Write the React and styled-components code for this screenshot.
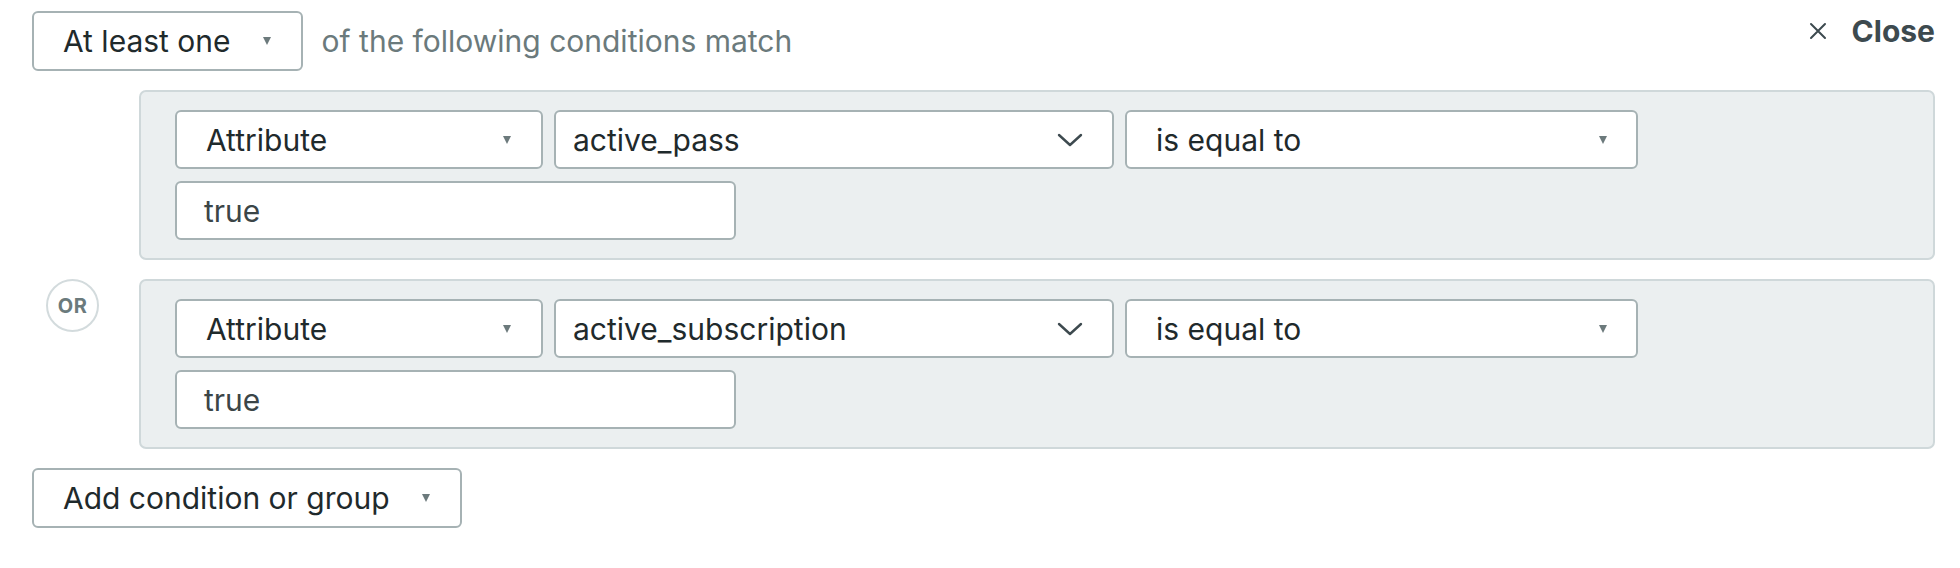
import React from "react";
import styled, { createGlobalStyle } from "styled-components";

const GlobalStyle = createGlobalStyle`
  body {
    margin: 0;
    background: #ffffff;
    font-family: Inter, "Liberation Sans", sans-serif;
    color: #232d2f;
  }
`;

const Page = styled.div`
  padding: 11px 25px 0 32px;
  display: flex;
  flex-direction: column;
  gap: 19px;
`;

const Header = styled.div`
  display: flex;
  align-items: center;
  gap: 19px;
  height: 60px;
`;

const HeaderText = styled.span`
  font-size: 30px;
  color: #6b7a7c;
  flex: 1;
`;

const CloseButton = styled.button`
  align-self: flex-start;
  margin-top: 2px;
  display: flex;
  align-items: center;
  gap: 25px;
  border: none;
  background: none;
  padding: 0;
  font-family: inherit;
  font-size: 30px;
  line-height: 36px;
  font-weight: 700;
  color: #3d4a4f;
  cursor: pointer;
`;

const Select = styled.div`
  box-sizing: border-box;
  display: flex;
  align-items: center;
  justify-content: space-between;
  gap: 32px;
  height: ${(p) => p.$height || 59}px;
  width: ${(p) => (p.$width ? `${p.$width}px` : "auto")};
  padding: 0 ${(p) => p.$padRight || 34}px 0 ${(p) => p.$padLeft || 29}px;
  border: 2px solid #a6b2b4;
  border-radius: 6px;
  background: #ffffff;
  font-family: inherit;
  font-size: 30px;
  color: #1f2a2c;
  white-space: nowrap;
`;

const Caret = styled.span`
  width: 0;
  height: 0;
  border-left: 4px solid transparent;
  border-right: 4px solid transparent;
  border-top: 8px solid #6c7a7c;
`;

const Chevron = () => (
  <svg width="26" height="16" viewBox="0 0 26 16" fill="none">
    <path d="M2 3l11 10L24 3" stroke="#3d4a4f" strokeWidth="2.4" strokeLinecap="round" strokeLinejoin="round" />
  </svg>
);

const CloseIcon = () => (
  <svg width="18" height="18" viewBox="0 0 18 18" fill="none">
    <path d="M2 2l14 14M16 2L2 16" stroke="#3d4a4f" strokeWidth="2" strokeLinecap="round" />
  </svg>
);

const ConditionRow = styled.div`
  display: grid;
  grid-template-columns: 107px 1fr;
  align-items: start;
`;

const Gutter = styled.div`
  padding-left: 14px;
`;

const OrBadge = styled.div`
  box-sizing: border-box;
  width: 53px;
  height: 53px;
  border-radius: 50%;
  border: 2px solid #d3dbdd;
  background: #ffffff;
  display: flex;
  align-items: center;
  justify-content: center;
  font-size: 20px;
  font-weight: 700;
  color: #6b7a7c;
  letter-spacing: 0.5px;
`;

const Group = styled.div`
  box-sizing: border-box;
  background: #ebeff0;
  border: 2px solid #cfd8da;
  border-radius: 7px;
  padding: 18px 20px 18px 34px;
  display: flex;
  flex-direction: column;
  gap: 12px;
`;

const FieldRow = styled.div`
  display: flex;
  gap: 11px;
`;

const ValueInput = styled.div`
  box-sizing: border-box;
  width: 561px;
  height: 59px;
  display: flex;
  align-items: center;
  padding-left: 27px;
  border: 2px solid #a6b2b4;
  border-radius: 6px;
  background: #ffffff;
  font-size: 30px;
  color: #3b4547;
`;

const AddButton = styled(Select).attrs({ as: "button" })`
  display: inline-flex;
  cursor: pointer;
`;

const conditions = [
  { attribute: "active_pass", value: "true" },
  { attribute: "active_subscription", value: "true" },
];

export default function App() {
  return (
    <>
      <GlobalStyle />
      <Page>
        <Header>
          <Select $height={60} $padLeft={29} $padRight={30}>
            At least one <Caret />
          </Select>
          <HeaderText>of the following conditions match</HeaderText>
          <CloseButton>
            <CloseIcon />
            Close
          </CloseButton>
        </Header>

        {conditions.map((c, i) => (
          <ConditionRow key={c.attribute}>
            <Gutter>{i > 0 && <OrBadge>OR</OrBadge>}</Gutter>
            <Group>
              <FieldRow>
                <Select $width={368} $padRight={30}>
                  Attribute <Caret />
                </Select>
                <Select $width={560} $padLeft={17} $padRight={29}>
                  {c.attribute} <Chevron />
                </Select>
                <Select $width={513} $padRight={29}>
                  is equal to <Caret />
                </Select>
              </FieldRow>
              <ValueInput>{c.value}</ValueInput>
            </Group>
          </ConditionRow>
        ))}

        <div>
          <AddButton $height={60} $padLeft={29} $padRight={30}>
            Add condition or group <Caret />
          </AddButton>
        </div>
      </Page>
    </>
  );
}
